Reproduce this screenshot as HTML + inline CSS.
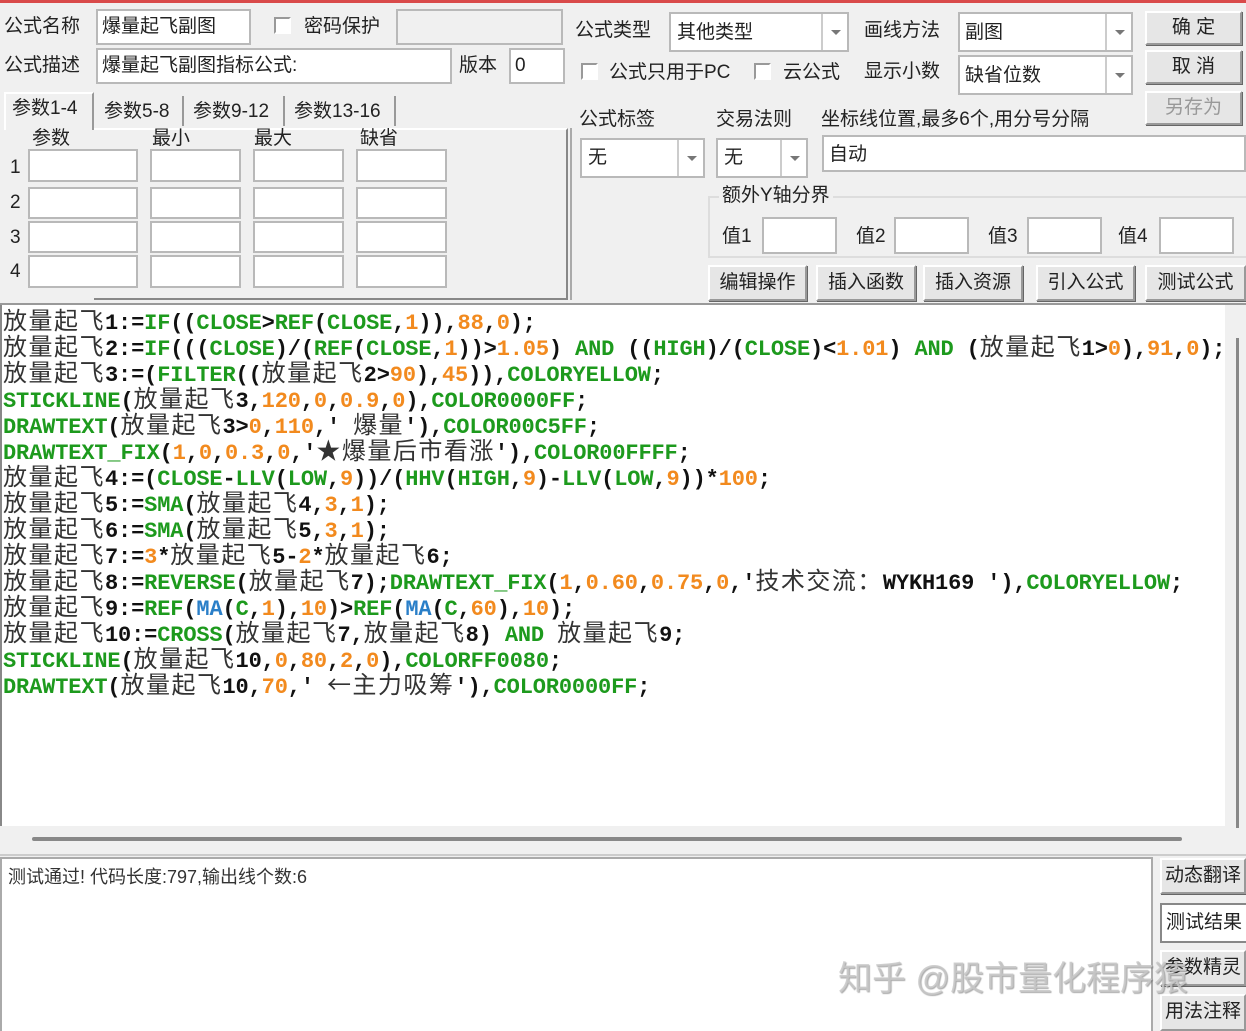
<!DOCTYPE html>
<html><head><meta charset="utf-8"><style>
*{margin:0;padding:0;box-sizing:border-box}
body{width:1246px;height:1031px;background:#f0f0f0;position:relative;overflow:hidden;font-family:"Liberation Sans","Noto Sans CJK SC",sans-serif;font-size:19px;color:#222}
.a{position:absolute;white-space:nowrap}
.in{position:absolute;background:#fff;border:2px solid #b9b9b9}
.t{position:absolute;white-space:nowrap;line-height:1}
.cb{position:absolute;width:17px;height:17px;border:2px solid #999;border-right-color:#fff;border-bottom-color:#fff;background:#fff}
.dd{position:absolute;top:0;right:0;width:26px;height:100%;border-left:2px solid #ccc;background:#fff}
.dd:after{content:"";position:absolute;left:8px;top:50%;margin-top:-2px;border:5px solid transparent;border-top:5px solid #777}
.btn{position:absolute;background:#e6e6e6;border:2px solid #999;border-top-color:#fff;border-left-color:#fff;box-shadow:1px 1px 0 #666;text-align:center;font-size:19px}
.code{position:absolute;left:0;top:305px;width:1225px;height:521px;background:#fff;border-left:2px solid #888}
.ln{position:absolute;left:3px;font-family:"Liberation Mono",monospace;font-weight:bold;font-size:22px;letter-spacing:-0.15px;white-space:nowrap;color:#111;height:26px;line-height:26px}
.c{font-family:"Noto Sans CJK SC",sans-serif;font-weight:normal;font-size:24px;letter-spacing:1.5px;color:#333}
.g{color:#1d9a1d}.o{color:#f28a1e}.b{color:#2a7fc8}
</style></head><body>
<div class="a" style="left:0;top:0;width:1246px;height:3px;background:#d94a4a"></div>
<div class="t" style="left:4px;top:17px">公式名称</div>
<div class="in" style="left:96px;top:9px;width:155px;height:36px"></div>
<div class="t" style="left:102px;top:17px">爆量起飞副图</div>
<div class="cb" style="left:274px;top:17px"></div>
<div class="t" style="left:304px;top:17px">密码保护</div>
<div class="in" style="left:396px;top:9px;width:167px;height:36px;background:#f0f0f0"></div>
<div class="t" style="left:4px;top:56px">公式描述</div>
<div class="in" style="left:96px;top:48px;width:356px;height:36px"></div>
<div class="t" style="left:102px;top:56px">爆量起飞副图指标公式:</div>
<div class="t" style="left:459px;top:56px">版本</div>
<div class="in" style="left:509px;top:48px;width:56px;height:36px"></div>
<div class="t" style="left:515px;top:56px">0</div>
<div class="a" style="left:4px;top:92px;width:90px;height:38px;border:2px solid #fff;border-right-color:#999;border-bottom:none;background:#f0f0f0"></div>
<div class="t" style="left:12px;top:99px">参数1-4</div>
<div class="t" style="left:104px;top:102px">参数5-8</div>
<div class="a" style="left:182px;top:96px;width:2px;height:30px;background:#999"></div>
<div class="t" style="left:193px;top:102px">参数9-12</div>
<div class="a" style="left:283px;top:96px;width:2px;height:30px;background:#999"></div>
<div class="t" style="left:294px;top:102px">参数13-16</div>
<div class="a" style="left:394px;top:96px;width:2px;height:30px;background:#999"></div>
<div class="a" style="left:94px;top:128px;width:474px;height:172px;border-top:2px solid #fff;border-right:2px solid #888;border-bottom:2px solid #888"></div>
<div class="t" style="left:32px;top:129px">参数</div>
<div class="t" style="left:152px;top:129px">最小</div>
<div class="t" style="left:254px;top:129px">最大</div>
<div class="t" style="left:360px;top:129px">缺省</div>
<div class="t" style="left:10px;top:158px">1</div><div class="t" style="left:10px;top:193px">2</div><div class="t" style="left:10px;top:228px">3</div><div class="t" style="left:10px;top:262px">4</div>
<div class="in" style="left:28px;top:149px;width:110px;height:33px"></div><div class="in" style="left:150px;top:149px;width:91px;height:33px"></div><div class="in" style="left:253px;top:149px;width:91px;height:33px"></div><div class="in" style="left:356px;top:149px;width:91px;height:33px"></div>
<div class="in" style="left:28px;top:187px;width:110px;height:32px"></div><div class="in" style="left:150px;top:187px;width:91px;height:32px"></div><div class="in" style="left:253px;top:187px;width:91px;height:32px"></div><div class="in" style="left:356px;top:187px;width:91px;height:32px"></div>
<div class="in" style="left:28px;top:221px;width:110px;height:32px"></div><div class="in" style="left:150px;top:221px;width:91px;height:32px"></div><div class="in" style="left:253px;top:221px;width:91px;height:32px"></div><div class="in" style="left:356px;top:221px;width:91px;height:32px"></div>
<div class="in" style="left:28px;top:255px;width:110px;height:33px"></div><div class="in" style="left:150px;top:255px;width:91px;height:33px"></div><div class="in" style="left:253px;top:255px;width:91px;height:33px"></div><div class="in" style="left:356px;top:255px;width:91px;height:33px"></div>
<div class="t" style="left:575px;top:21px">公式类型</div>
<div class="in" style="left:669px;top:12px;width:180px;height:40px"><div class="dd"></div></div>
<div class="t" style="left:677px;top:23px">其他类型</div>
<div class="t" style="left:864px;top:21px">画线方法</div>
<div class="in" style="left:958px;top:12px;width:175px;height:40px"><div class="dd"></div></div>
<div class="t" style="left:965px;top:23px">副图</div>
<div class="btn" style="left:1145px;top:11px;width:97px;height:34px;line-height:30px">确 定</div>
<div class="cb" style="left:581px;top:63px"></div>
<div class="t" style="left:609px;top:63px">公式只用于PC</div>
<div class="cb" style="left:754px;top:63px"></div>
<div class="t" style="left:783px;top:63px">云公式</div>
<div class="t" style="left:864px;top:62px">显示小数</div>
<div class="in" style="left:958px;top:55px;width:175px;height:40px"><div class="dd"></div></div>
<div class="t" style="left:965px;top:66px">缺省位数</div>
<div class="btn" style="left:1145px;top:50px;width:97px;height:34px;line-height:30px">取 消</div>
<div class="btn" style="left:1145px;top:91px;width:97px;height:34px;line-height:30px;color:#999">另存为</div>
<div class="t" style="left:579px;top:110px">公式标签</div>
<div class="t" style="left:716px;top:110px">交易法则</div>
<div class="t" style="left:821px;top:110px">坐标线位置,最多6个,用分号分隔</div>
<div class="a" style="left:570px;top:128px;width:2px;height:172px;background:#aaa"></div>
<div class="in" style="left:580px;top:138px;width:125px;height:40px"><div class="dd"></div></div>
<div class="t" style="left:588px;top:148px">无</div>
<div class="in" style="left:716px;top:138px;width:92px;height:40px"><div class="dd"></div></div>
<div class="t" style="left:724px;top:148px">无</div>
<div class="in" style="left:822px;top:135px;width:424px;height:37px"></div>
<div class="t" style="left:829px;top:145px">自动</div>
<div class="a" style="left:708px;top:196px;width:540px;height:62px;border:2px solid #ddd;border-right:none"></div>
<div class="t" style="left:719px;top:186px;background:#f0f0f0;padding:0 3px">额外Y轴分界</div>
<div class="t" style="left:722px;top:227px">值1</div><div class="in" style="left:762px;top:217px;width:75px;height:37px"></div>
<div class="t" style="left:856px;top:227px">值2</div><div class="in" style="left:894px;top:217px;width:75px;height:37px"></div>
<div class="t" style="left:988px;top:227px">值3</div><div class="in" style="left:1027px;top:217px;width:75px;height:37px"></div>
<div class="t" style="left:1118px;top:227px">值4</div><div class="in" style="left:1159px;top:217px;width:75px;height:37px"></div>
<div class="btn" style="left:708px;top:265px;width:99px;height:36px;line-height:32px">编辑操作</div>
<div class="btn" style="left:816px;top:265px;width:100px;height:36px;line-height:32px">插入函数</div>
<div class="btn" style="left:923px;top:265px;width:100px;height:36px;line-height:32px">插入资源</div>
<div class="btn" style="left:1036px;top:265px;width:99px;height:36px;line-height:32px">引入公式</div>
<div class="btn" style="left:1145px;top:265px;width:101px;height:36px;line-height:32px">测试公式</div>
<div class="a" style="left:0;top:303px;width:1246px;height:2px;background:#999"></div>
<div class="code"></div>
<div class="a" style="left:1236px;top:338px;width:3px;height:490px;background:#888"></div>
<div class="ln" style="top:306px"><span class="c">放量起飞</span>1:=<span class="g">IF</span>((<span class="g">CLOSE</span>&gt;<span class="g">REF</span>(<span class="g">CLOSE</span>,<span class="o">1</span>)),<span class="o">88</span>,<span class="o">0</span>);</div>
<div class="ln" style="top:332px"><span class="c">放量起飞</span>2:=<span class="g">IF</span>(((<span class="g">CLOSE</span>)/(<span class="g">REF</span>(<span class="g">CLOSE</span>,<span class="o">1</span>))&gt;<span class="o">1.05</span>) <span class="g">AND</span> ((<span class="g">HIGH</span>)/(<span class="g">CLOSE</span>)&lt;<span class="o">1.01</span>) <span class="g">AND</span> (<span class="c">放量起飞</span>1&gt;<span class="o">0</span>),<span class="o">91</span>,<span class="o">0</span>);</div>
<div class="ln" style="top:358px"><span class="c">放量起飞</span>3:=(<span class="g">FILTER</span>((<span class="c">放量起飞</span>2&gt;<span class="o">90</span>),<span class="o">45</span>)),<span class="g">COLORYELLOW</span>;</div>
<div class="ln" style="top:384px"><span class="g">STICKLINE</span>(<span class="c">放量起飞</span>3,<span class="o">120</span>,<span class="o">0</span>,<span class="o">0.9</span>,<span class="o">0</span>),<span class="g">COLOR0000FF</span>;</div>
<div class="ln" style="top:410px"><span class="g">DRAWTEXT</span>(<span class="c">放量起飞</span>3&gt;<span class="o">0</span>,<span class="o">110</span>,' <span class="c">爆量</span>'),<span class="g">COLOR00C5FF</span>;</div>
<div class="ln" style="top:436px"><span class="g">DRAWTEXT_FIX</span>(<span class="o">1</span>,<span class="o">0</span>,<span class="o">0.3</span>,<span class="o">0</span>,'<span class="c">★爆量后市看涨</span>'),<span class="g">COLOR00FFFF</span>;</div>
<div class="ln" style="top:462px"><span class="c">放量起飞</span>4:=(<span class="g">CLOSE</span>-<span class="g">LLV</span>(<span class="g">LOW</span>,<span class="o">9</span>))/(<span class="g">HHV</span>(<span class="g">HIGH</span>,<span class="o">9</span>)-<span class="g">LLV</span>(<span class="g">LOW</span>,<span class="o">9</span>))*<span class="o">100</span>;</div>
<div class="ln" style="top:488px"><span class="c">放量起飞</span>5:=<span class="g">SMA</span>(<span class="c">放量起飞</span>4,<span class="o">3</span>,<span class="o">1</span>);</div>
<div class="ln" style="top:514px"><span class="c">放量起飞</span>6:=<span class="g">SMA</span>(<span class="c">放量起飞</span>5,<span class="o">3</span>,<span class="o">1</span>);</div>
<div class="ln" style="top:540px"><span class="c">放量起飞</span>7:=<span class="o">3</span>*<span class="c">放量起飞</span>5-<span class="o">2</span>*<span class="c">放量起飞</span>6;</div>
<div class="ln" style="top:566px"><span class="c">放量起飞</span>8:=<span class="g">REVERSE</span>(<span class="c">放量起飞</span>7);<span class="g">DRAWTEXT_FIX</span>(<span class="o">1</span>,<span class="o">0.60</span>,<span class="o">0.75</span>,<span class="o">0</span>,'<span class="c">技术交流：</span>WYKH169 '),<span class="g">COLORYELLOW</span>;</div>
<div class="ln" style="top:592px"><span class="c">放量起飞</span>9:=<span class="g">REF</span>(<span class="b">MA</span>(<span class="g">C</span>,<span class="o">1</span>),<span class="o">10</span>)&gt;<span class="g">REF</span>(<span class="b">MA</span>(<span class="g">C</span>,<span class="o">60</span>),<span class="o">10</span>);</div>
<div class="ln" style="top:618px"><span class="c">放量起飞</span>10:=<span class="g">CROSS</span>(<span class="c">放量起飞</span>7,<span class="c">放量起飞</span>8) <span class="g">AND</span> <span class="c">放量起飞</span>9;</div>
<div class="ln" style="top:644px"><span class="g">STICKLINE</span>(<span class="c">放量起飞</span>10,<span class="o">0</span>,<span class="o">80</span>,<span class="o">2</span>,<span class="o">0</span>),<span class="g">COLORFF0080</span>;</div>
<div class="ln" style="top:670px"><span class="g">DRAWTEXT</span>(<span class="c">放量起飞</span>10,<span class="o">70</span>,' <span class="c">←主力吸筹</span>'),<span class="g">COLOR0000FF</span>;</div>
<div class="a" style="left:32px;top:837px;width:1150px;height:4px;background:#888;border-radius:2px"></div>
<div class="a" style="left:0;top:854px;width:1246px;height:2px;background:#ccc"></div>
<div class="a" style="left:0;top:857px;width:1153px;height:174px;background:#fff;border:2px solid #aaa;border-bottom:none"></div>
<div class="t" style="left:8px;top:868px;font-size:18px;color:#333">测试通过! 代码长度:797,输出线个数:6</div>
<div class="btn" style="left:1160px;top:858px;width:86px;height:36px;line-height:32px">动态翻译</div>
<div class="a" style="left:1160px;top:903px;width:86px;height:40px;background:#fff;border:2px solid #888;border-right:none;line-height:36px;text-align:center">测试结果</div>
<div class="btn" style="left:1160px;top:950px;width:86px;height:36px;line-height:32px">参数精灵</div>
<div class="btn" style="left:1160px;top:994px;width:86px;height:37px;line-height:32px">用法注释</div>
<div class="t" style="left:838px;top:962px;font-size:34px;color:rgba(200,200,200,0.85);text-shadow:1px 1px 1px rgba(90,90,90,0.5)">知乎 @股市量化程序猿</div>
</body></html>
